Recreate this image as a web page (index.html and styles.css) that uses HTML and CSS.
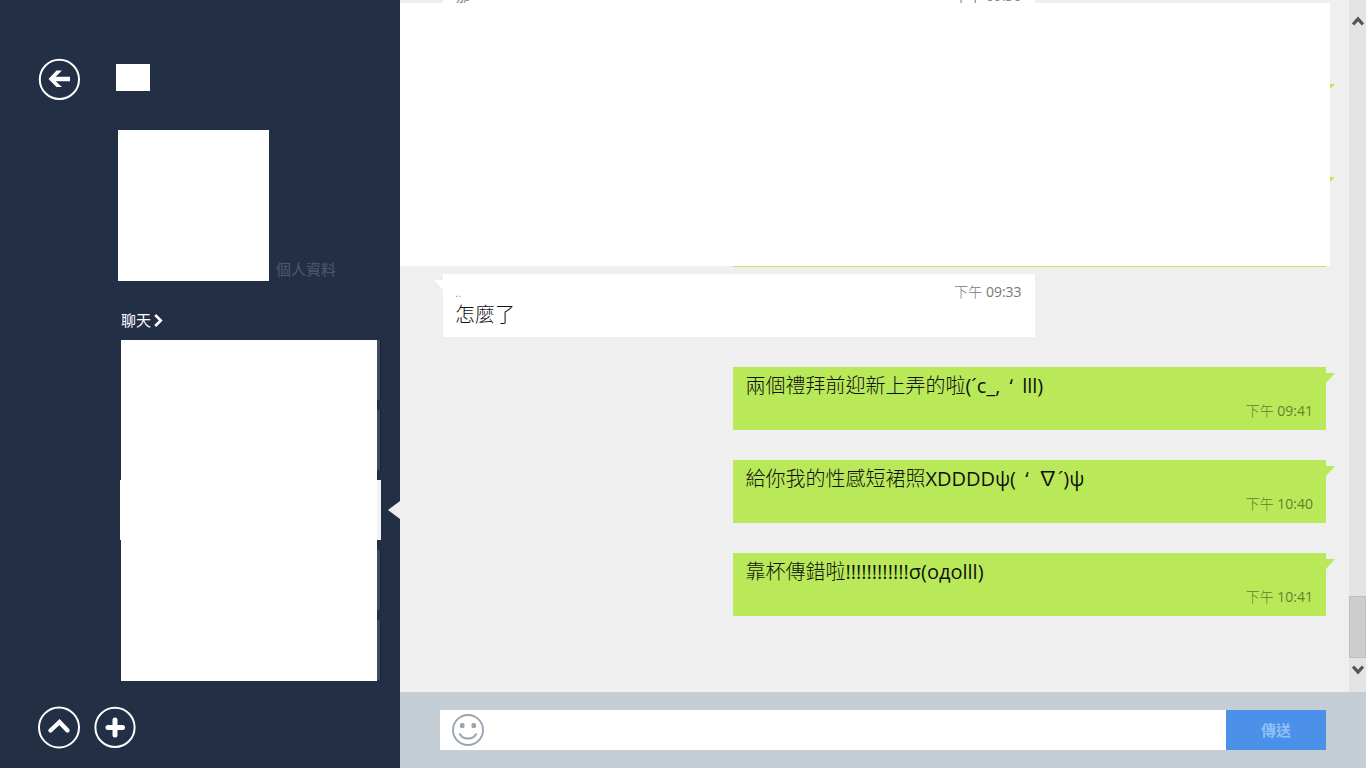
FILE: index.html
```html
<!DOCTYPE html>
<html lang="zh-Hant">
<head>
<meta charset="utf-8">
<meta name="viewport" content="width=device-width, initial-scale=1">
<title>聊天</title>
<link rel="stylesheet" href="styles.css">
</head>
<body>
<div class="app">
  <aside class="sidebar">
    <header class="sidebar-head">
      <button class="round" type="button" aria-label="返回">
        <svg viewBox="0 0 42 42"><circle cx="21.400" cy="21.400" r="19.600" fill="none" stroke="#fff" stroke-width="2"/><path d="M10.500 21 18.500 12.500H24L17.700 18.800H32V23.200H17.700L24 29H18.500Z" fill="#fff"/></svg>
      </button>
      <div class="contact-name"></div>
    </header>
    <section class="profile">
      <div class="avatar"></div>
      <a class="profile-link" href="#profile">個人資料</a>
    </section>
    <a class="chats-link" href="#chats">聊天<svg viewBox="0 0 9 13"><path d="M1.2 1 6.8 6.5 1.2 12" fill="none" stroke="#fff" stroke-width="2.6"/></svg></a>
    <ul class="chat-list">
      <li class="chat"></li>
      <li class="chat"></li>
      <li class="chat active"></li>
      <li class="chat"></li>
      <li class="chat"></li>
    </ul>
    <footer class="sidebar-foot">
      <button class="round" type="button" aria-label="展開">
        <svg viewBox="0 0 42 42"><circle cx="21" cy="21.500" r="20" fill="none" stroke="#fff" stroke-width="2"/><path d="M12.500 24.500 21.500 16 29.500 24.500" fill="none" stroke="#fff" stroke-width="4.400" stroke-linecap="round"/></svg>
      </button>
      <button class="round" type="button" aria-label="新增">
        <svg viewBox="0 0 42 42"><circle cx="21" cy="21.400" r="19.600" fill="none" stroke="#fff" stroke-width="2"/><path d="M14 21.500H28.500M21 14V29" fill="none" stroke="#fff" stroke-width="5" stroke-linecap="round"/></svg>
      </button>
    </footer>
  </aside>
  <main class="conversation">
    <div class="viewport">
      <div class="thread">
        <div class="peek"><div class="peek-card"><span>那</span><time>下午 09:30</time></div></div>
        <div class="blank">
          <i class="blank-tail first"></i>
          <i class="blank-tail second"></i>
        </div>
        <div class="messages">
          <div class="sent-edge"></div>
          <article class="bubble received">
            <div class="meta"><span class="sender">..</span><time>下午 <span class="latin">09:33</span></time></div>
            <p>怎麼了</p>
          </article>
          <article class="bubble sent"><p>兩個禮拜前迎新上弄的啦<span class="latin">(´c_, <span class="quote">‘</span> lll)</span></p><time>下午 <span class="latin">09:41</span></time></article>
          <article class="bubble sent"><p>給你我的性感短裙照<span class="latin">XDDDDψ( <span class="quote">‘</span> ∇´)ψ</span></p><time>下午 <span class="latin">10:40</span></time></article>
          <article class="bubble sent"><p>靠杯傳錯啦<span class="latin">!!!!!!!!!!!!σ(oдolll)</span></p><time>下午 <span class="latin">10:41</span></time></article>
        </div>
      </div>
      <div class="scroll">
        <button class="scroll-up" type="button" aria-label="向上捲動"><svg viewBox="0 0 12 10"><path d="M1 8.500 6 3 11 8.500" fill="none" stroke="#555" stroke-width="3.300"/></svg></button>
        <div class="scroll-thumb"></div>
        <button class="scroll-down" type="button" aria-label="向下捲動"><svg viewBox="0 0 12 10"><path d="M1 1.500 6 7 11 1.500" fill="none" stroke="#555" stroke-width="3.300"/></svg></button>
      </div>
    </div>
    <form class="composer">
      <div class="field">
        <button class="emoji" type="button" aria-label="表情">
          <svg viewBox="0 0 32 32"><circle cx="16" cy="16" r="15" fill="none" stroke="#98a4ae" stroke-width="1.900"/><rect x="8" y="9" width="4.500" height="5" rx="1.500" fill="#98a4ae"/><rect x="19.500" y="9" width="4.500" height="5" rx="1.500" fill="#98a4ae"/><path d="M7.500 19.500C11 26.300 21 26.300 24.500 19.500" fill="none" stroke="#98a4ae" stroke-width="2"/></svg>
        </button>
        <input type="text" aria-label="訊息">
      </div>
      <button class="send" type="button">傳送</button>
    </form>
  </main>
</div>
</body>
</html>
```
FILE: styles.css
```css
* { box-sizing: border-box; }
body {
  margin: 0;
  font-family: "Open Sans", "Noto Sans CJK TC", "Noto Sans", sans-serif;
  color: #111;
}
button { margin: 0; padding: 0; border: 0; background: none; cursor: pointer; }
svg { display: block; }
p { margin: 0; }
.app { display: flex; height: 100vh; overflow: hidden; }

.sidebar {
  flex: 0 0 400px;
  display: flex;
  flex-direction: column;
  padding: 58px 0 20px 38px;
  background: #232f45;
}
.round { width: 42px; height: 42px; }
.round svg { width: 42px; height: 42px; overflow: visible; }
.sidebar-head { display: flex; gap: 36px; }
.contact-name { width: 34px; height: 27px; margin-top: 6px; background: #fff; }
.profile { display: flex; align-items: flex-end; gap: 7px; margin: 30px 0 0 80px; }
.avatar { width: 151px; height: 151px; background: #fff; }
.profile-link {
  color: #4b5a76;
  font-size: 15px;
  line-height: 24px;
  text-decoration: none;
}
.chats-link {
  display: flex;
  align-items: center;
  gap: 3px;
  margin: 27px 0 8px 83px;
  color: #fff;
  font-size: 15px;
  line-height: 24px;
  text-decoration: none;
}
.chats-link svg { width: 9px; height: 13px; }
.chat-list {
  display: flex;
  flex-direction: column;
  gap: 10px;
  width: 256px;
  margin: 0 0 0 83px;
  padding: 0 0 1px;
  background: #fff;
  list-style: none;
}
.chat {
  height: 60px;
  margin-right: -4px;
  background: linear-gradient(90deg, #fff 256px, #3f4b60 256px, #3f4b60 259px, #1a2333 259px);
}
.chat.active {
  position: relative;
  margin-left: -1px;
  background: linear-gradient(90deg, #fff 257px, #f2f3f4 257px);
}
.chat.active::after {
  content: "";
  position: absolute;
  top: 21px;
  right: -19px;
  border: solid transparent;
  border-width: 9px 12px 9px 0;
  border-right-color: #efefef;
}
.sidebar-foot { display: flex; gap: 14px; margin-top: auto; }

.conversation { flex: 1; min-width: 0; display: flex; flex-direction: column; }
.viewport { flex: 1; min-height: 0; display: flex; background: #efefef; }
.thread { flex: 1; min-width: 0; overflow: hidden; }
.peek {
  display: flex;
  align-items: flex-end;
  height: 3px;
  padding: 0 23px 0 43px;
  overflow: hidden;
}
.peek-card {
  display: flex;
  justify-content: space-between;
  width: 67%;
  padding: 0 13px;
  background: #fff;
  color: #888;
  font-size: 14px;
  line-height: 14px;
}
.blank { position: relative; height: 263px; margin-right: 19px; background: #fff; }
.blank-tail {
  position: absolute;
  right: -5px;
  border: solid transparent;
  border-width: 5px 5px 0 0;
  border-top-color: #b9e958;
}
.blank-tail.first { top: 81px; }
.blank-tail.second { top: 174px; }
.messages { display: flex; flex-direction: column; gap: 30px; padding: 0 23px 30px 43px; }
.sent-edge {
  align-self: flex-end;
  width: calc(67% + 1px);
  height: 1px;
  margin-bottom: -23px;
  background: #b9e958;
}
.bubble {
  position: relative;
  width: 67%;
  min-height: 63px;
  padding: 4px 13px 7px 12px;
}
.bubble p { font-size: 20px; line-height: 30px; font-weight: 300; }
.bubble time, .sender { font-size: 14px; line-height: 20px; font-weight: 300; }
.latin { font-weight: 400; }
.quote { padding: 0 4px; }
.received { background: #fff; padding: 8px 13px 4px 12px; }
.received time { color: #777; }
.received p { line-height: 26px; }
.meta { display: flex; justify-content: space-between; }
.sender { color: #888; }
.sent {
  display: flex;
  flex-direction: column;
  align-self: flex-end;
  width: calc(67% + 1px);
  background: #b9e958;
}
.sent time { align-self: flex-end; color: #64802e; }
.bubble::after { content: ""; position: absolute; top: 6px; border: solid transparent; }
.received::after { left: -9px; border-width: 10px 0 0 9px; border-top-color: #fff; }
.sent::after { right: -9px; border-width: 10px 9px 0 0; border-top-color: #b9e958; }

.scroll { flex: 0 0 17px; display: flex; flex-direction: column; background: #e4e4e4; }
.scroll svg { width: 12px; height: 10px; margin: 0 auto; }
.scroll-up { height: 34px; margin-bottom: auto; padding-top: 8px; }
.scroll-thumb { height: 62px; border: 1px solid #bfbfbf; background: #cdcdcd; }
.scroll-down { height: 34px; padding-bottom: 10px; }

.composer { display: flex; padding: 18px 40px; background: #c5cdd5; }
.field { flex: 1; min-width: 0; display: flex; align-items: center; gap: 8px; height: 40px; padding-left: 12px; background: #fff; }
.emoji, .emoji svg { width: 32px; height: 32px; }
.field input { flex: 1; min-width: 0; height: 40px; border: 0; outline: 0; background: none; font: 300 20px "Open Sans", "Noto Sans CJK TC", sans-serif; }
.send {
  width: 100px;
  height: 40px;
  padding-bottom: 2px;
  background: #4b90e9;
  color: #8fc0f8;
  font: 700 15px "Open Sans", "Noto Sans CJK TC", sans-serif;
}
```
